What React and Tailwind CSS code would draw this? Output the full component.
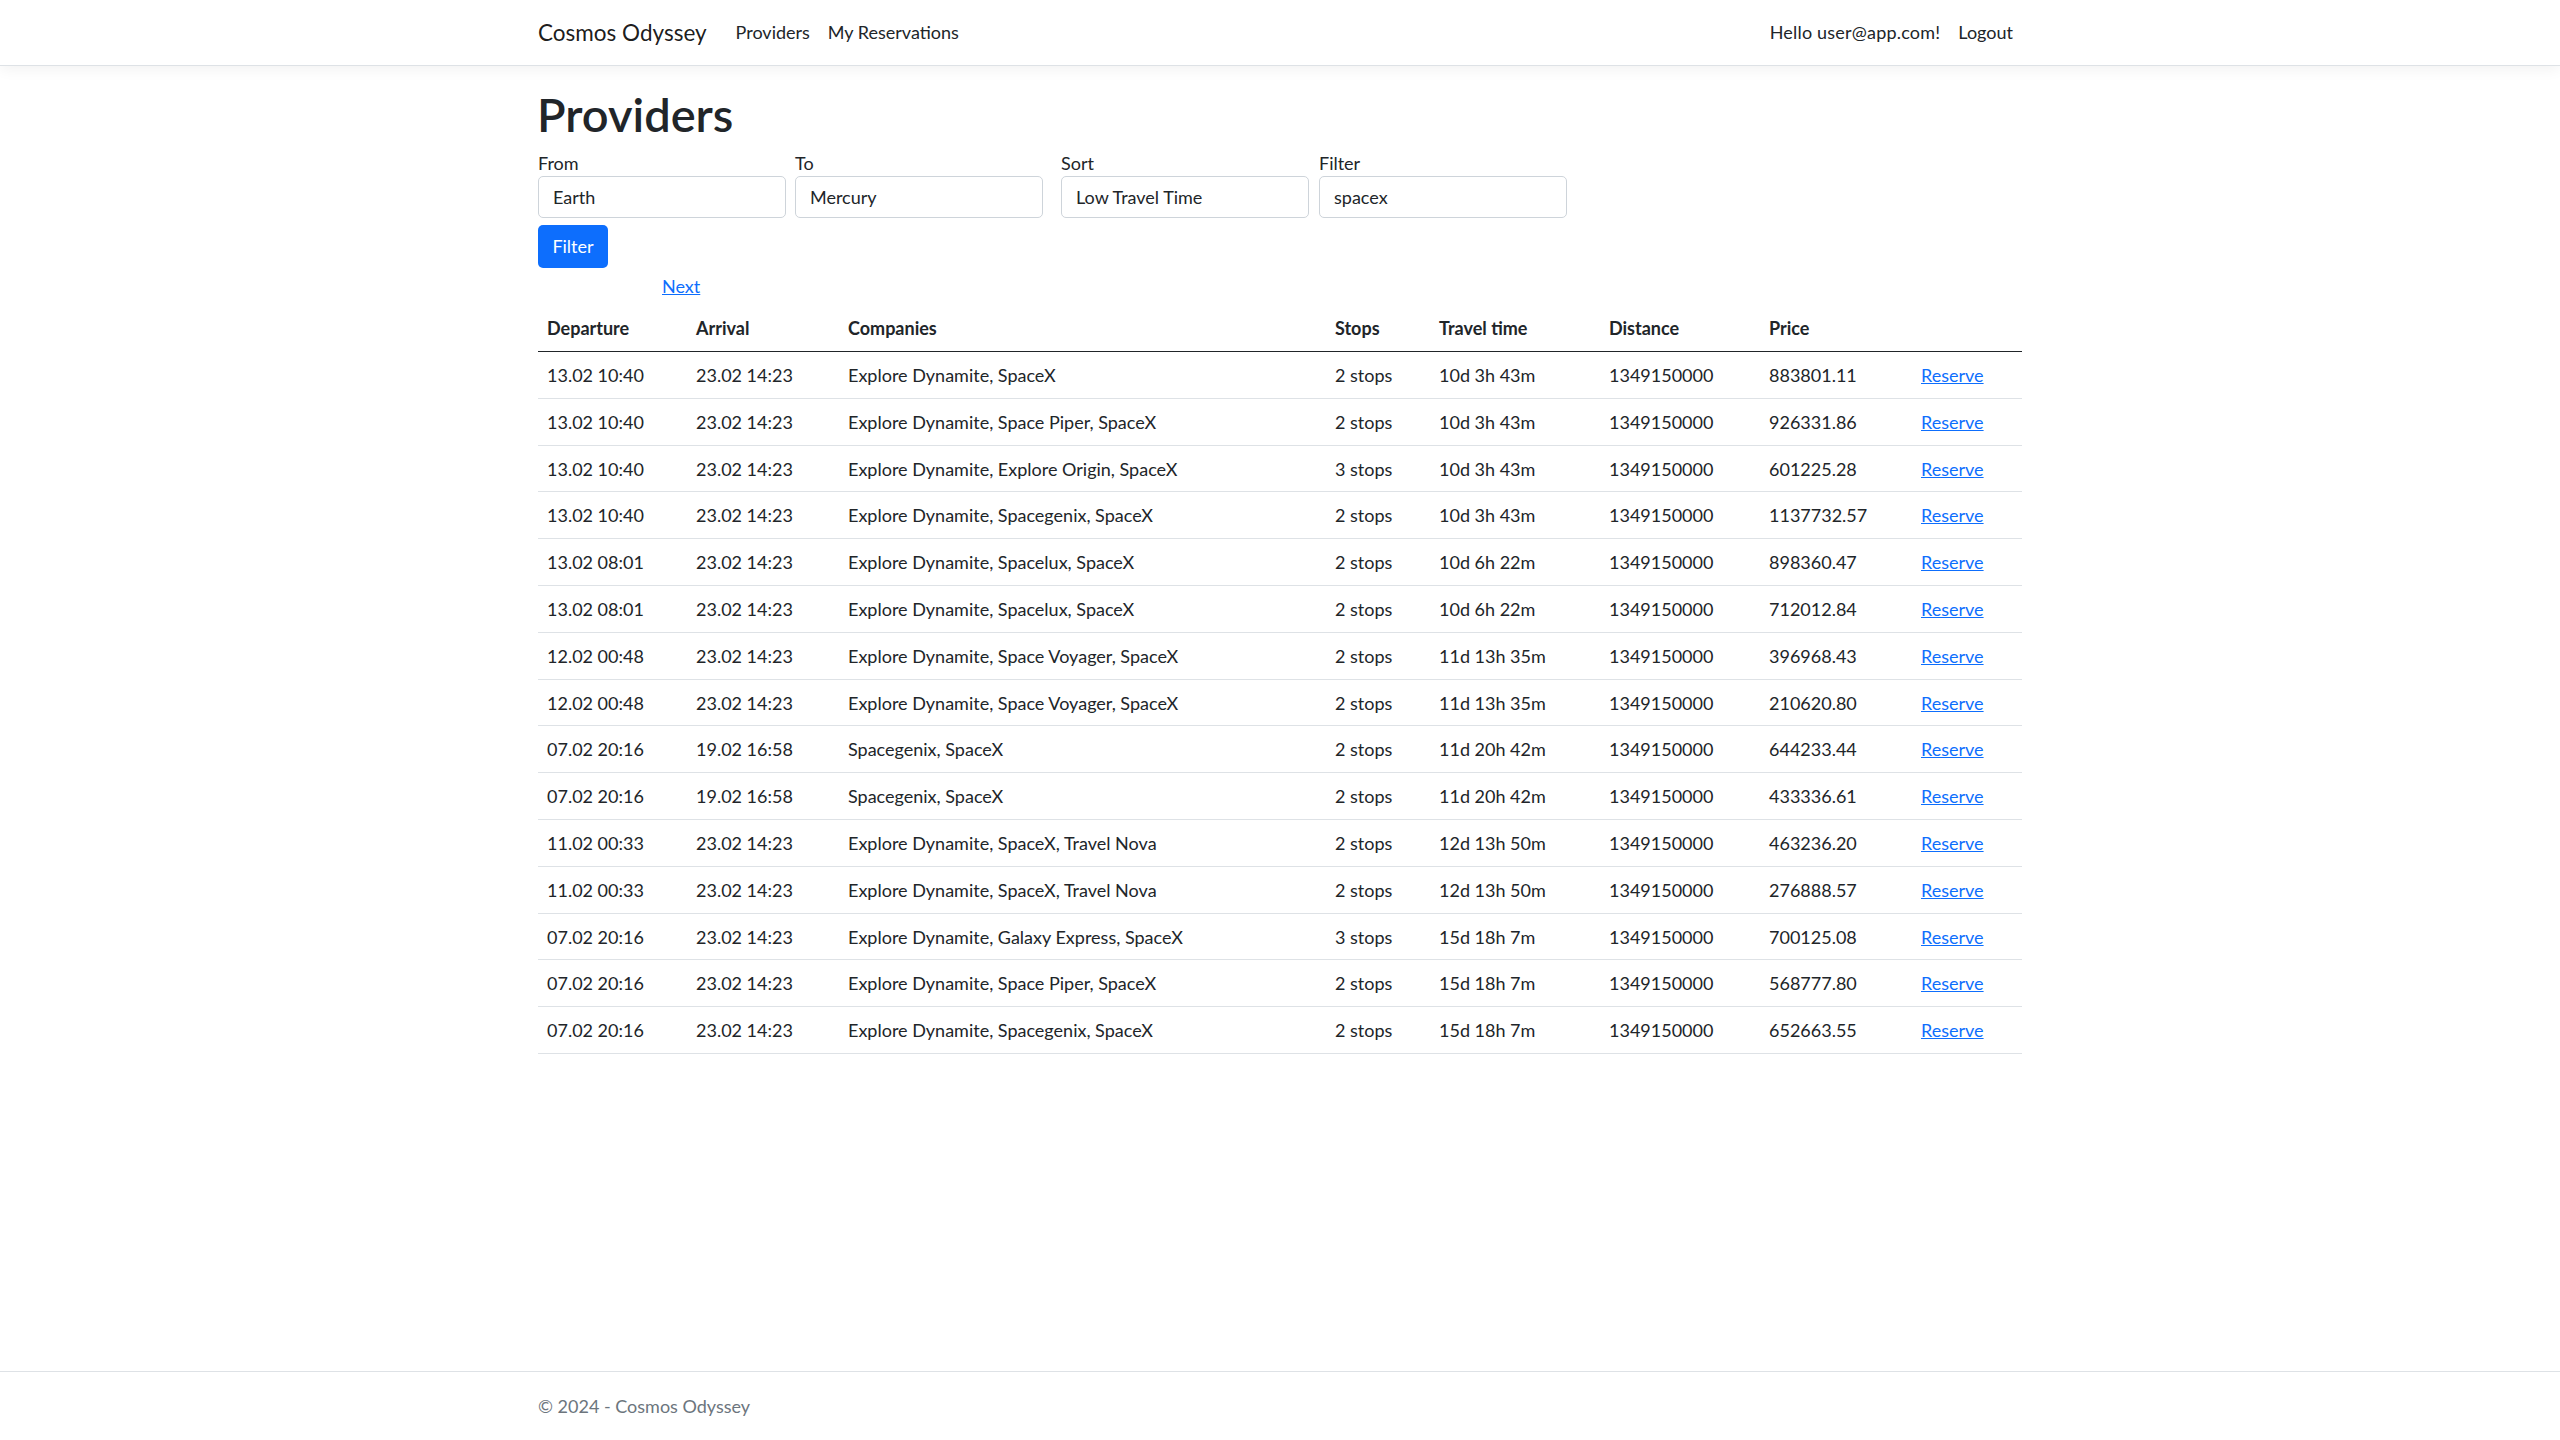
import React from "react";

const rows = [
  ["13.02 10:40", "23.02 14:23", "Explore Dynamite, SpaceX", "2 stops", "10d 3h 43m", "1349150000", "883801.11"],
  ["13.02 10:40", "23.02 14:23", "Explore Dynamite, Space Piper, SpaceX", "2 stops", "10d 3h 43m", "1349150000", "926331.86"],
  ["13.02 10:40", "23.02 14:23", "Explore Dynamite, Explore Origin, SpaceX", "3 stops", "10d 3h 43m", "1349150000", "601225.28"],
  ["13.02 10:40", "23.02 14:23", "Explore Dynamite, Spacegenix, SpaceX", "2 stops", "10d 3h 43m", "1349150000", "1137732.57"],
  ["13.02 08:01", "23.02 14:23", "Explore Dynamite, Spacelux, SpaceX", "2 stops", "10d 6h 22m", "1349150000", "898360.47"],
  ["13.02 08:01", "23.02 14:23", "Explore Dynamite, Spacelux, SpaceX", "2 stops", "10d 6h 22m", "1349150000", "712012.84"],
  ["12.02 00:48", "23.02 14:23", "Explore Dynamite, Space Voyager, SpaceX", "2 stops", "11d 13h 35m", "1349150000", "396968.43"],
  ["12.02 00:48", "23.02 14:23", "Explore Dynamite, Space Voyager, SpaceX", "2 stops", "11d 13h 35m", "1349150000", "210620.80"],
  ["07.02 20:16", "19.02 16:58", "Spacegenix, SpaceX", "2 stops", "11d 20h 42m", "1349150000", "644233.44"],
  ["07.02 20:16", "19.02 16:58", "Spacegenix, SpaceX", "2 stops", "11d 20h 42m", "1349150000", "433336.61"],
  ["11.02 00:33", "23.02 14:23", "Explore Dynamite, SpaceX, Travel Nova", "2 stops", "12d 13h 50m", "1349150000", "463236.20"],
  ["11.02 00:33", "23.02 14:23", "Explore Dynamite, SpaceX, Travel Nova", "2 stops", "12d 13h 50m", "1349150000", "276888.57"],
  ["07.02 20:16", "23.02 14:23", "Explore Dynamite, Galaxy Express, SpaceX", "3 stops", "15d 18h 7m", "1349150000", "700125.08"],
  ["07.02 20:16", "23.02 14:23", "Explore Dynamite, Space Piper, SpaceX", "2 stops", "15d 18h 7m", "1349150000", "568777.80"],
  ["07.02 20:16", "23.02 14:23", "Explore Dynamite, Spacegenix, SpaceX", "2 stops", "15d 18h 7m", "1349150000", "652663.55"],
];

const headers = ["Departure", "Arrival", "Companies", "Stops", "Travel time", "Distance", "Price", ""];

function Field({ label, value, className }) {
  return (
    <div className={"flex flex-col w-[248px] " + (className || "")}>
      <label className="text-[18px] leading-[25px]">{label}</label>
      <div className="h-[42px] border border-[#ced4da] rounded-[5px] bg-white px-[14px] flex items-center text-[18px] text-[#212529]">
        {value}
      </div>
    </div>
  );
}

export default function App() {
  return (
    <div
      className="min-h-screen flex flex-col bg-white text-[#212529]"
      style={{ fontFamily: '"Segoe UI", Lato, "Noto Sans", sans-serif' }}
    >
      <header className="bg-white border-b border-[#dee2e6] shadow-[0_4px_13px_rgba(0,0,0,0.05)] h-[66px]">
        <div className="w-[1484px] mx-auto h-full flex items-center">
          <span className="text-[22.5px] leading-[34px] text-[rgba(0,0,0,0.9)] mr-[20px]">Cosmos Odyssey</span>
          <nav className="flex items-center text-[18px] leading-[27px]">
            <span className="px-[9px]">Providers</span>
            <span className="px-[9px]">My Reservations</span>
          </nav>
          <div className="ml-auto flex items-center text-[18px] leading-[27px]">
            <span className="px-[9px] tracking-[0.2px]">Hello user@app.com!</span>
            <span className="px-[9px]">Logout</span>
          </div>
        </div>
      </header>

      <main className="w-[1484px] mx-auto pt-[21px] flex-1">
        <h1 className="text-[47px] leading-[54px] font-semibold mb-[10px] -ml-[1px]">Providers</h1>
        <div className="flex">
          <Field label="From" value="Earth" />
          <Field label="To" value="Mercury" className="ml-[9px]" />
          <Field label="Sort" value="Low Travel Time" className="ml-[18px]" />
          <Field label="Filter" value="spacex" className="ml-[10px]" />
        </div>
        <button className="mt-[7px] h-[43px] w-[70px] rounded-[5px] bg-[#0d6efd] text-white text-[18px] leading-[27px]">
          Filter
        </button>
        <div className="mt-[5px] h-[28px] leading-[27px] text-[18px]">
          <a className="ml-[124px] text-[#0d6efd] underline" href="#">Next</a>
        </div>
        <table className="w-full table-fixed border-collapse mt-[5px] text-[18px]">
          <colgroup>
            <col className="w-[149px]" />
            <col className="w-[152px]" />
            <col className="w-[487px]" />
            <col className="w-[104px]" />
            <col className="w-[170px]" />
            <col className="w-[160px]" />
            <col className="w-[152px]" />
            <col className="w-[110px]" />
          </colgroup>
          <thead>
            <tr className="border-b border-[#212529]">
              {headers.map((h, i) => (
                <th key={i} className="text-left font-bold px-[9px] py-[9px] leading-[27px]">{h}</th>
              ))}
            </tr>
          </thead>
          <tbody>
            {rows.map((r, i) => (
              <tr key={i} className="border-b border-[#dee2e6]">
                {r.map((c, j) => (
                  <td key={j} className="px-[9px] pt-[10px] pb-[8px] leading-[27.8px] whitespace-nowrap">{c}</td>
                ))}
                <td className="px-[9px] pt-[10px] pb-[8px] leading-[27.8px]">
                  <a href="#" className="text-[#0d6efd] underline">Reserve</a>
                </td>
              </tr>
            ))}
          </tbody>
        </table>
      </main>

      <footer className="border-t border-[#dee2e6] h-[69px]">
        <div className="w-[1484px] mx-auto h-full flex items-center text-[18px] text-[#6c757d]">
          © 2024 - Cosmos Odyssey
        </div>
      </footer>
    </div>
  );
}
